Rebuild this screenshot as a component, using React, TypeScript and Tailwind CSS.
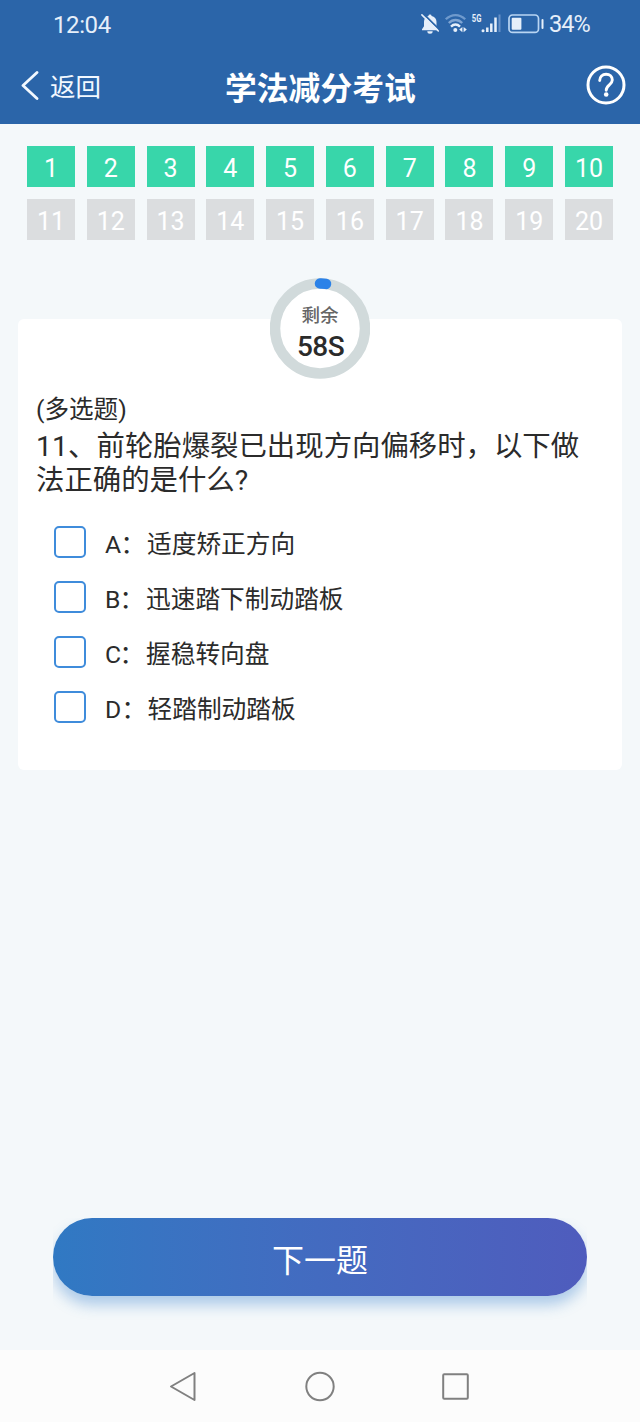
const cells = Array.from({ length: 20 }, (_, i) => i + 1);

const options = [
  { key: 'A', text: '适度矫正方向', label: 'w-[42px]', letter: 'w-[15.5px]' },
  { key: 'B', text: '迅速踏下制动踏板', label: 'w-[41px]', letter: 'w-[14.5px]' },
  { key: 'C', text: '握稳转向盘', label: 'w-[41px]', letter: 'w-[14.5px]' },
  { key: 'D', text: '轻踏制动踏板', label: 'w-[42.5px]', letter: 'w-[16.5px]' },
];

function StatusIcons() {
  return (
    <svg width="126" height="24" viewBox="0 0 126 24" fill="none">
      {/* muted bell */}
      <path d="M10 2.600a1.600 1.600 0 0 1 1.600 1.400c2.900.7 4.900 3 4.900 5.800v4.400l2 3v1H2v-1l2-3V9.800C4 7 5.700 4.700 8.400 4A1.600 1.600 0 0 1 10 2.600Z" fill="#e6effa" />
      <path d="M7.300 19.200h5.400a2.700 2.500 0 0 1-5.400 0Z" fill="#e6effa" />
      <path d="M3 1.400 19.400 17.600" stroke="#2b65a9" strokeWidth="1.800" />
      <path d="M1.900 2.900 18.300 19" stroke="#e6effa" strokeWidth="1.600" strokeLinecap="round" />
      {/* wifi */}
      <path d="M25.800 7.300C31.500 1.700 39.500 1.700 45.200 7.300" stroke="#6f9acd" strokeWidth="2.300" />
      <path d="M28.800 11C32.800 7 38.200 7 42.200 11" stroke="#7fa5d3" strokeWidth="2.300" />
      <path d="M31 14.600c2.700-2.800 6.300-2.800 9 0" stroke="#e6effa" strokeWidth="2.300" />
      <circle cx="35.300" cy="18" r="2" fill="#e6effa" />
      <path d="M42.400 15v5.200l-3.200-2.600ZM43.600 15v5.200l3.200-2.600Z" fill="#e6effa" />
      {/* mobile signal */}
      <text x="51.800" y="10.300" fontSize="11" fontWeight="700" fill="#e6effa" textLength="9.600" lengthAdjust="spacingAndGlyphs">5G</text>
      <circle cx="63" cy="18.700" r="1.500" fill="#e6effa" />
      <path d="M67.300 15.500V20M71.300 11.500V20M75.500 5.500V20" stroke="#e6effa" strokeWidth="2.500" />
      <path d="M79.500 2.500V20" stroke="#6690c6" strokeWidth="2" />
      {/* battery */}
      <rect x="89" y="3" width="29.500" height="17.400" rx="3.500" stroke="#b9d5f3" strokeWidth="1.700" />
      <rect x="91.700" y="5.700" width="9.700" height="12" rx="1" fill="#e6effa" />
      <path d="M122.500 8v8" stroke="#e6effa" strokeWidth="2" strokeLinecap="round" />
    </svg>
  );
}

function Timer() {
  return (
    <div className="relative z-10 flex h-[101px] w-[100px] flex-col items-center self-center">
      <svg className="absolute inset-0" width="100" height="101" viewBox="0.5 0 100 101">
        <circle cx="50.500" cy="50.500" r="45" fill="#fff" stroke="#d1dadb" strokeWidth="10.500" />
        <path d="M50.500 5.500Q53.500 5.400 56.500 5.900" fill="none" stroke="#2b82e8" strokeWidth="10.500" strokeLinecap="round" />
      </svg>
      <span className="relative mt-[26px] text-[18.500px] leading-6 font-medium text-[#666]">剩余</span>
      <span className="relative mt-[3px] ml-px text-[28px] leading-8 font-medium tracking-[-0.600px] text-[#2b2b2b]">58S</span>
    </div>
  );
}

export default function App() {
  return (
    <div className="flex h-[1422px] w-[640px] flex-col overflow-hidden bg-[#f4f8fa] font-[Roboto,'Noto_Sans_CJK_SC',sans-serif] text-[#2b2b2b]">
      <header className="h-[124px] shrink-0 bg-[#2b65a9] text-white">
        <div className="flex h-12 items-center pl-[53px] text-[#e6effa]">
          <span className="w-[367px] pt-[2px] text-2xl tracking-[-0.400px]">12:04</span>
          <StatusIcons />
          <span className="ml-[3px] pt-[2px] text-[23.500px] tracking-[-1px]">34%</span>
        </div>
        <div className="flex h-[76px] items-center">
          <div className="flex w-[225px] items-center pl-[21px]">
            <svg width="18" height="30" viewBox="0 0 18 30" fill="none" stroke="#f2f8ff" strokeWidth="2.800" strokeLinecap="round" strokeLinejoin="round">
              <path d="M16 1.500 2 14.500l14 13" />
            </svg>
            <span className="ml-[11px] pt-[2px] text-[25.500px] text-[#f2f8ff]">返回</span>
          </div>
          <h1 className="w-[361px] pt-[7px] text-[31.800px] font-bold">学法减分考试</h1>
          <svg className="-mt-[2px]" width="40" height="40" viewBox="0 0 40 40" fill="none" stroke="#fff">
            <circle cx="20" cy="20" r="18" strokeWidth="3" />
            <path d="M13.700 15.500c0-3.800 2.700-6.200 6.400-6.200s6.200 2.400 6.200 5.800c0 4.700-6.100 4.900-6.100 10.200" strokeWidth="2.900" strokeLinecap="round" />
            <circle cx="20.200" cy="29.500" r="2.300" fill="#fff" stroke="none" />
          </svg>
        </div>
      </header>

      <main className="flex flex-1 flex-col px-[18px] pt-[22px]">
        <div className="grid grid-cols-10 gap-x-[11.800px] gap-y-[11.500px] px-[9px]">
          {cells.map((n) => (
            <div
              key={n}
              className={`flex h-[41px] items-center justify-center pt-[5px] text-[25px] text-white ${n <= 10 ? 'bg-[#38d6aa]' : 'bg-[#dbdddf]'}`}
            >
              {n}
            </div>
          ))}
        </div>

        <div className="mt-[38px] flex flex-col">
          <Timer />
          <section className="-mt-[59.500px] h-[451px] rounded-md bg-white px-[18px] pt-[74px]">
            <div className="text-[24.600px] leading-[34px]">(多选题)</div>
            <p className="mt-[3px] text-[28.400px] leading-[34px] whitespace-nowrap">
              <span className="inline-flex w-[60.5px]"><span className="w-[33px]">11</span>、</span>前轮胎爆裂已出现方向偏移时，以下做
              <br />
              法正确的是什么?
            </p>
            <ul className="mt-[19px] pl-[18px]">
              {options.map((o) => (
                <li key={o.key} className="flex h-[55px] items-center text-[24.700px]">
                  <span className="mb-[5px] h-8 w-8 rounded-[5px] border-2 border-[#3f8cdb]" />
                  <span className={`ml-[19px] flex whitespace-nowrap ${o.label}`}>
                    <span className={o.letter}>{o.key}</span>：
                  </span>
                  <span>{o.text}</span>
                </li>
              ))}
            </ul>
          </section>
        </div>
      </main>

      <div className="mx-[53px] h-[132px] shrink-0 overflow-hidden">
        <button className="h-[78px] w-full rounded-full bg-gradient-to-r from-[#3079c3] to-[#4f5cbd] pt-[7px] text-[32px] text-white shadow-[0_9px_14px_rgba(48,121,203,0.360)]">
          下一题
        </button>
      </div>

      <nav className="h-[72px] shrink-0 bg-[#fcfcfc] pl-[169px]">
        <div className="flex h-full items-center">
          <svg width="302" height="32" viewBox="0 0 302 32" fill="none" stroke="#808080" strokeWidth="2" strokeLinejoin="round">
            <path d="M2 16.500 25.500 3v27Z" />
            <circle cx="151" cy="16.500" r="13.700" />
            <rect x="274.200" y="4.200" width="24.600" height="24.600" rx="1" />
          </svg>
        </div>
      </nav>
    </div>
  );
}
